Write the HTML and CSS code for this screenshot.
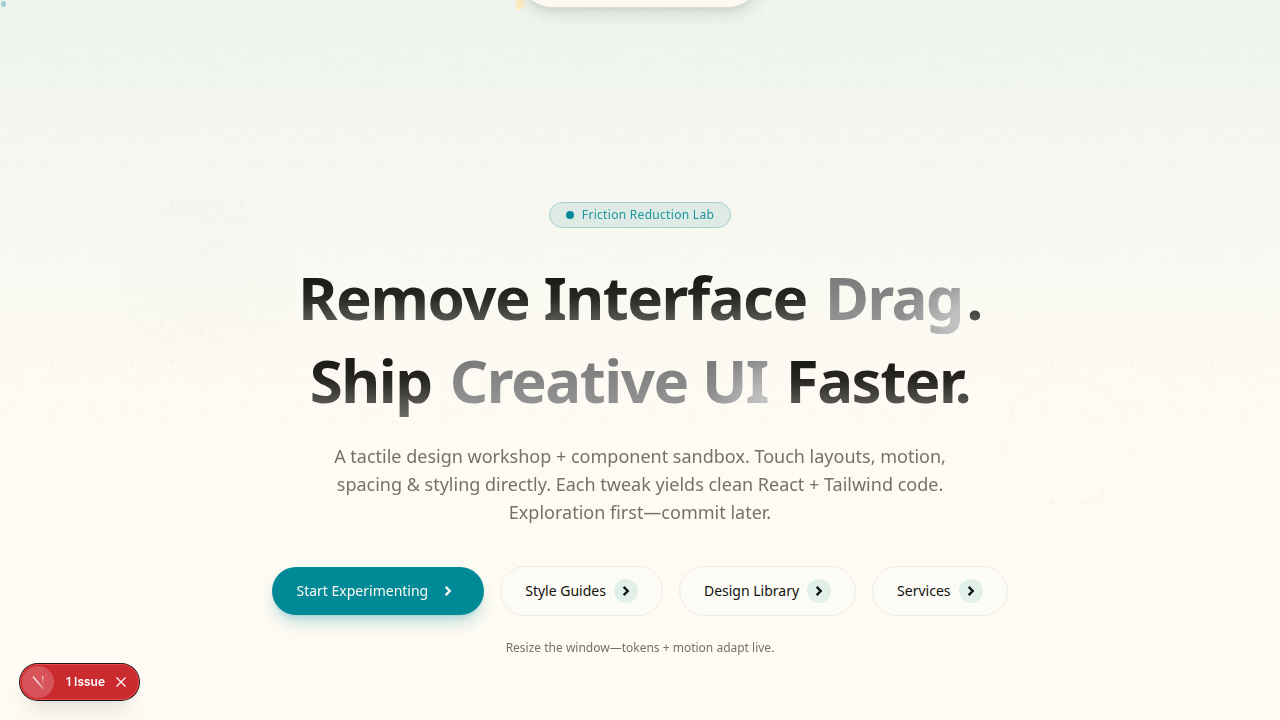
FILE: index.html
```html
<!DOCTYPE html>
<html lang="en">
<head>
<meta charset="utf-8">
<meta name="viewport" content="width=device-width, initial-scale=1">
<title>Friction Reduction Lab</title>
<link rel="stylesheet" href="styles.css">
</head>
<body>
<div class="backdrop" aria-hidden="true">
  <canvas class="dots"></canvas>
  <span class="orb orb-left"></span>
  <span class="orb orb-right"></span>
  <span class="cursor-dot"></span>
  <span class="nav-accent"></span>
</div>
<header class="nav-pill"></header>
<main class="hero">
  <p class="badge"><span class="badge-dot"></span>Friction Reduction Lab</p>
  <h1 class="title">
    <span class="line"><span class="ink">Remove Interface</span> <span class="muted">Drag</span><span class="ink">.</span></span>
    <span class="line"><span class="ink">Ship</span> <span class="muted">Creative UI</span> <span class="ink">Faster.</span></span>
  </h1>
  <p class="lead">A tactile design workshop + component sandbox. Touch layouts, motion, spacing &amp; styling directly. Each tweak yields clean React + Tailwind code. Exploration first—commit later.</p>
  <nav class="actions">
    <a class="button primary" href="#start">Start Experimenting<span class="arrow"><svg viewBox="0 0 24 24" aria-hidden="true"><path d="M8 5l7 7-7 7"/></svg></span></a>
    <a class="button" href="#guides">Style Guides<span class="arrow"><svg viewBox="0 0 24 24" aria-hidden="true"><path d="M8 5l7 7-7 7"/></svg></span></a>
    <a class="button" href="#library">Design Library<span class="arrow"><svg viewBox="0 0 24 24" aria-hidden="true"><path d="M8 5l7 7-7 7"/></svg></span></a>
    <a class="button" href="#services">Services<span class="arrow"><svg viewBox="0 0 24 24" aria-hidden="true"><path d="M8 5l7 7-7 7"/></svg></span></a>
  </nav>
  <p class="note">Resize the window—tokens + motion adapt live.</p>
</main>
<aside class="issues">
  <span class="mark"><svg viewBox="0 0 32 32" aria-hidden="true">
    <defs>
      <linearGradient id="slash" x1="11" y1="10" x2="21" y2="23" gradientUnits="userSpaceOnUse"><stop offset="0.4" stop-color="#fff" stop-opacity=".8"/><stop offset="1" stop-color="#fff" stop-opacity=".3"/></linearGradient>
      <linearGradient id="stem" x1="20" y1="10" x2="20" y2="18" gradientUnits="userSpaceOnUse"><stop offset="0" stop-color="#fff" stop-opacity=".7"/><stop offset="1" stop-color="#fff" stop-opacity="0"/></linearGradient>
    </defs>
    <path d="M11 10.500L21.500 23" stroke="url(#slash)" stroke-width="1.600"/><path d="M20 10h1.500v8h-1.500z" fill="url(#stem)"/>
  </svg></span>
  <button class="issues-open" type="button">1 Issue</button>
  <button class="issues-close" type="button" aria-label="Dismiss"><svg viewBox="0 0 12 12" aria-hidden="true"><path d="M1.500 1.500l9 9M10.500 1.500l-9 9"/></svg></button>
</aside>
<script src="dots.js"></script>
</body>
</html>
```
FILE: styles.css
```css
* { box-sizing: border-box; }
body {
  margin: 0;
  min-height: 100vh;
  overflow: hidden;
  position: relative;
  font-family: "Noto Sans", sans-serif;
  color: #1c1b17;
  background: linear-gradient(#eef4ee 0%, #f6f7f1 22%, #fefbf3 60%, #fdfbf3 100%);
}
p, h1 { margin: 0; }
.backdrop { position: absolute; inset: 0; overflow: hidden; }
.dots { position: absolute; inset: 0; }
.orb { position: absolute; border-radius: 50%; }
.orb-left {
  left: 120px; top: 196px; width: 176px; height: 176px;
  background: radial-gradient(circle closest-side, rgba(90, 100, 90, .012) 50%, rgba(90, 100, 90, .007) 51%);
}
.orb-right { left: 1003px; top: 378px; width: 128px; height: 128px; border: 2px solid rgba(90, 110, 100, .01); }
.cursor-dot { position: absolute; left: 1px; top: 1px; width: 5px; height: 6px; border-radius: 3px; background: #9ccfcf; }
.nav-accent { position: absolute; left: 516px; top: -10px; width: 8px; height: 20px; border-radius: 0 0 6px 0; background: #ffedc4; }
.nav-pill {
  position: absolute; left: 50%; top: -66px; width: 248px; height: 74px;
  transform: translateX(-50%);
  border: 1px solid #dedcd1; border-radius: 37px; background: #fbf9f1;
  box-shadow: 0 10px 15px -3px rgba(0, 0, 0, .1), 0 4px 6px -4px rgba(0, 0, 0, .1);
}
.hero {
  position: relative;
  min-height: 100vh;
  display: flex;
  flex-direction: column;
  align-items: center;
  padding: 202px 24px 64px;
  text-align: center;
}
.badge {
  display: flex; align-items: center; gap: 8px;
  padding: 4px 16px;
  border: 1px solid #a5d1ce; border-radius: 16px;
  background: #deebe5; color: #1c959f;
  font-size: 12px; line-height: 16px; letter-spacing: 0.025em;
}
.badge-dot { width: 8px; height: 8px; border-radius: 50%; background: #008996; }
.title { margin-top: 28px; font-size: 60px; line-height: 83px; font-weight: 700; letter-spacing: -0.025em; }
.line { display: block; }
.ink, .muted { display: inline-block; background-clip: text; -webkit-background-clip: text; color: transparent; }
.ink { background-image: linear-gradient(#1c1b17 30%, #282722 50%, #504f4b 73%, #72716d 100%); }
.muted { padding: 0 4px; background-image: radial-gradient(circle 64px at 100% 85%, #c4c4c4 0%, #c0c0c0 25%, rgba(150, 150, 150, 0) 100%), linear-gradient(#7c7c7c 30%, #949494 80%); }
.lead { margin-top: 20px; max-width: 672px; padding: 0 24px; font-size: 18px; line-height: 28px; color: #75716a; }
.actions { margin-top: 40px; display: flex; flex-wrap: wrap; justify-content: center; align-items: center; gap: 16px; }
.button {
  display: flex; align-items: center; gap: 8px;
  padding: 12px 24px;
  border: 1px solid #edeae0; border-radius: 25px;
  background: #fdfbf6; color: #11110e;
  font-size: 14px; line-height: 20px; text-decoration: none;
}
.arrow { display: grid; place-items: center; width: 24px; height: 24px; border-radius: 50%; background: #e2f0ea; }
.arrow svg { width: 14px; height: 14px; fill: none; stroke: currentColor; stroke-width: 4; }
.primary { border: 0; background: #008996; color: #fbf9f1; box-shadow: 0 10px 15px -3px rgba(0, 137, 150, .25), 0 4px 6px -4px rgba(0, 137, 150, .25); }
.primary .arrow { background: none; }
.note { margin-top: 24px; font-size: 12px; line-height: 16px; color: #75716a; }
.issues {
  position: fixed; left: 20px; bottom: 20px;
  display: flex; align-items: center;
  height: 36px; padding: 0 12px 0 2px;
  border-radius: 18px; background: #cb2a2f; color: #fff;
  box-shadow: inset 0 0 0 1px #e5484d, 0 0 0 1px #171717, 0 16px 24px -8px rgba(0, 0, 0, .12), 0 4px 8px rgba(0, 0, 0, .04);
}
.issues button { border: 0; padding: 0; background: none; color: inherit; }
.mark { width: 32px; height: 32px; border-radius: 50%; background: #d6545a; }
.mark svg { display: block; }
.issues .issues-open { margin-left: 12px; font: 600 12px/16px Inter, sans-serif; }
.issues-close { display: grid; place-items: center; width: 12px; height: 12px; margin-left: 10px; }
.issues-close svg { width: 12px; height: 12px; fill: none; stroke: #fff; stroke-width: 1.2; }
```
FILE: dots.js
```js
const canvas = document.querySelector(".dots");
const pitch = 10;

// Small repeatable generator so the dot field keeps the same look on each draw.
function draw() {
  let seed = 7;
  const next = () => (seed = (seed * 16807) % 2147483647) / 2147483647;
  canvas.width = innerWidth;
  canvas.height = innerHeight;
  const ctx = canvas.getContext("2d");
  for (let y = 0; y < canvas.height; y += pitch) {
    for (let x = 0; x < canvas.width; x += pitch) {
      const alpha = [0, 0.005, 0.009, 0.016][Math.floor(next() * 4)];
      const quiet = y > 500 && y < 680 ? 0.3 : 1;
      ctx.fillStyle = `rgba(40, 60, 60, ${alpha * quiet})`;
      ctx.fillRect(x, y, 4, 4);
    }
  }
}
draw();
addEventListener("resize", draw);
```
